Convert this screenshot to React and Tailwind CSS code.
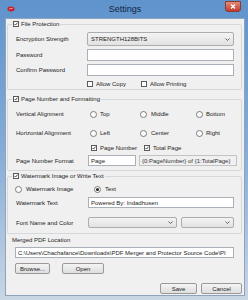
import React from 'react';

const font = { fontFamily: '"Liberation Sans", Arial, sans-serif' };

function Check({ checked }) {
  return (
    <span className="w-[6px] h-[6px] border border-[#5a5a5a] bg-white flex items-center justify-center shrink-0">
      {checked && (
        <svg width="6" height="6" viewBox="0 0 6 6">
          <path d="M0.8 3 L2.4 4.6 L5.2 1" stroke="#1a1a1a" strokeWidth="1.2" fill="none" />
        </svg>
      )}
    </span>
  );
}

function Radio({ checked }) {
  return (
    <span className="w-[7px] h-[7px] rounded-full border border-[#7a7a7a] bg-white flex items-center justify-center shrink-0">
      {checked && <span className="w-[3px] h-[3px] rounded-full bg-[#222]" />}
    </span>
  );
}

function TextBox({ value, className }) {
  return (
    <div className={`h-[11px] border border-[#a9b0b8] bg-white flex items-center px-[2px] overflow-hidden whitespace-nowrap ${className}`}>
      {value}
    </div>
  );
}

function Combo({ value, className }) {
  return (
    <div className={`border border-[#adadad] rounded-[2px] bg-gradient-to-b from-[#f3f3f3] to-[#e2e2e2] flex items-center px-[3px] ${className}`}>
      <span className="flex-1 whitespace-nowrap">{value}</span>
      <svg width="5" height="3" viewBox="0 0 5 3">
        <path d="M0.5 0.5 L2.5 2.5 L4.5 0.5" stroke="#555" strokeWidth="0.9" fill="none" />
      </svg>
    </div>
  );
}

function Button({ children, className }) {
  return (
    <div className={`h-[11px] border border-[#9a9a9a] rounded-[2px] bg-gradient-to-b from-[#f4f4f4] to-[#dedede] flex items-center justify-center ${className}`}>
      {children}
    </div>
  );
}

function Legend({ text }) {
  return (
    <legend className="ml-[4px] px-[1px] h-[8px] flex items-center gap-[2px]">
      <Check checked />
      <span>{text}</span>
    </legend>
  );
}

export default function App() {
  return (
    <div
      className="w-[248px] h-[300px] flex flex-col bg-gradient-to-b from-[#5f93cc] via-[#86acd6] to-[#c9d6e4] text-[6px] text-[#1c1c1c] leading-none"
      style={font}
    >
      {/* title bar */}
      <div className="h-[18px] flex items-center px-[7px] shrink-0">
        <svg width="8" height="6" viewBox="0 0 8 6">
          <ellipse cx="4" cy="3" rx="3.6" ry="2.4" fill="#c3212a" />
          <path d="M2 3 L6 2.2" stroke="#f4b0b0" strokeWidth="0.8" />
        </svg>
        <span className="flex-1 text-center text-[9px] text-[#10253f] pl-[10px]">Settings</span>
        <div className="w-[16px] h-[11px] mb-[5px] rounded-b-[3px] bg-gradient-to-b from-[#e58a7a] to-[#c2392a] border border-[#8e3b32] flex items-center justify-center">
          <svg width="6" height="5" viewBox="0 0 6 5">
            <path d="M1 0.5 L5 4.5 M5 0.5 L1 4.5" stroke="white" strokeWidth="1.3" />
          </svg>
        </div>
      </div>

      {/* client */}
      <div className="flex-1 ml-[5px] mr-[3px] mb-[4px] bg-[#f0f0f0] border border-[#8ea4bd] px-[1px] pt-[1px] flex flex-col">
        {/* File protection */}
        <fieldset className="border border-[#d5d9de] rounded-[2px] mr-[1px] pb-[1px]">
          <Legend text="File Protection" />
          <div className="flex flex-col pl-[8px]">
            <div className="flex items-center mt-[4px] h-[14px]">
              <span className="w-[71px]">Encryption Strength</span>
              <Combo value="STRENGTH128BITS" className="w-[147px] h-[14px]" />
            </div>
            <div className="flex items-center mt-[3px]">
              <span className="w-[71px]">Password</span>
              <TextBox className="w-[147px] h-[12px]" />
            </div>
            <div className="flex items-center mt-[3px]">
              <span className="w-[71px]">Confirm Password</span>
              <TextBox className="w-[147px] h-[12px]" />
            </div>
            <div className="flex items-center mt-[4px] h-[8px]">
              <span className="w-[71px]" />
              <div className="w-[54px] flex items-center gap-[3px]">
                <Check />
                <span>Allow Copy</span>
              </div>
              <div className="flex items-center gap-[3px]">
                <Check />
                <span>Allow Printing</span>
              </div>
            </div>
          </div>
        </fieldset>

        {/* Page number */}
        <fieldset className="border border-[#d5d9de] rounded-[2px] mr-[1px] mt-[5px] pb-[4px]">
          <Legend text="Page Number and Formatting" />
          <div className="flex flex-col pl-[8px]">
            <div className="flex items-center mt-[7px] h-[8px]">
              <span className="w-[74px]">Vertical Alignment</span>
              <div className="w-[50px] flex items-center gap-[3px]"><Radio /><span>Top</span></div>
              <div className="w-[56px] flex items-center gap-[4px]"><Radio /><span>Middle</span></div>
              <div className="flex items-center gap-[3px]"><Radio /><span>Bottom</span></div>
            </div>
            <div className="flex items-center mt-[11px] h-[8px]">
              <span className="w-[74px]">Horizontal Alignment</span>
              <div className="w-[50px] flex items-center gap-[3px]"><Radio /><span>Left</span></div>
              <div className="w-[56px] flex items-center gap-[4px]"><Radio /><span>Center</span></div>
              <div className="flex items-center gap-[3px]"><Radio /><span>Right</span></div>
            </div>
            <div className="flex items-center mt-[7px] h-[8px]">
              <span className="w-[75px]" />
              <div className="w-[53px] flex items-center gap-[3px]"><Check checked /><span>Page Number</span></div>
              <div className="flex items-center gap-[3px]"><Check checked /><span>Total Page</span></div>
            </div>
            <div className="flex items-center mt-[3px]">
              <span className="w-[72px]">Page Number Format</span>
              <TextBox value="Page" className="w-[48px]" />
              <div className="ml-[3px] w-[98px] h-[11px] border border-[#c3c3c3] bg-[#f0f0f0] flex items-center px-[2px] text-[#333] whitespace-nowrap">
                {'{0:PageNumber} of {1:TotalPage}'}
              </div>
            </div>
          </div>
        </fieldset>

        {/* Watermark */}
        <fieldset className="border border-[#d5d9de] rounded-[2px] mr-[1px] mt-[1px] pb-[5px]">
          <Legend text="Watermark Image or Write Text" />
          <div className="flex flex-col">
            <div className="flex items-center mt-[5px] h-[8px] pl-[7px]">
              <div className="w-[79px] flex items-center gap-[4px]"><Radio /><span>Watermark Image</span></div>
              <div className="flex items-center gap-[4px]"><Radio checked /><span>Text</span></div>
            </div>
            <div className="flex items-center mt-[4px] pl-[8px]">
              <span className="w-[72px]">Watermark Text</span>
              <TextBox value="Powered By: Indadhusen" className="w-[146px]" />
            </div>
            <div className="flex items-center mt-[9px] pl-[8px]">
              <span className="w-[72px]">Font Name and Color</span>
              <Combo className="w-[89px] h-[11px]" />
              <Combo className="w-[53px] h-[11px] ml-[4px]" />
            </div>
          </div>
        </fieldset>

        {/* Merged location */}
        <div className="pl-[5px] mt-[2px] h-[8px] flex items-center">Merged PDF Location</div>
        <div className="pl-[8px] mt-[3px]">
          <TextBox value="C:\Users\Chachafance\Downloads\PDF Merger and Protector Source Code\PI" className="w-[219px]" />
        </div>
        <div className="pl-[8px] mt-[5px] flex gap-[12px]">
          <Button className="w-[35px]">Browse...</Button>
          <Button className="w-[42px]">Open</Button>
        </div>
        <div className="mt-[9px] flex justify-end gap-[4px] pr-[1px]">
          <Button className="w-[37px]">Save</Button>
          <Button className="w-[41px]">Cancel</Button>
        </div>
      </div>
    </div>
  );
}
